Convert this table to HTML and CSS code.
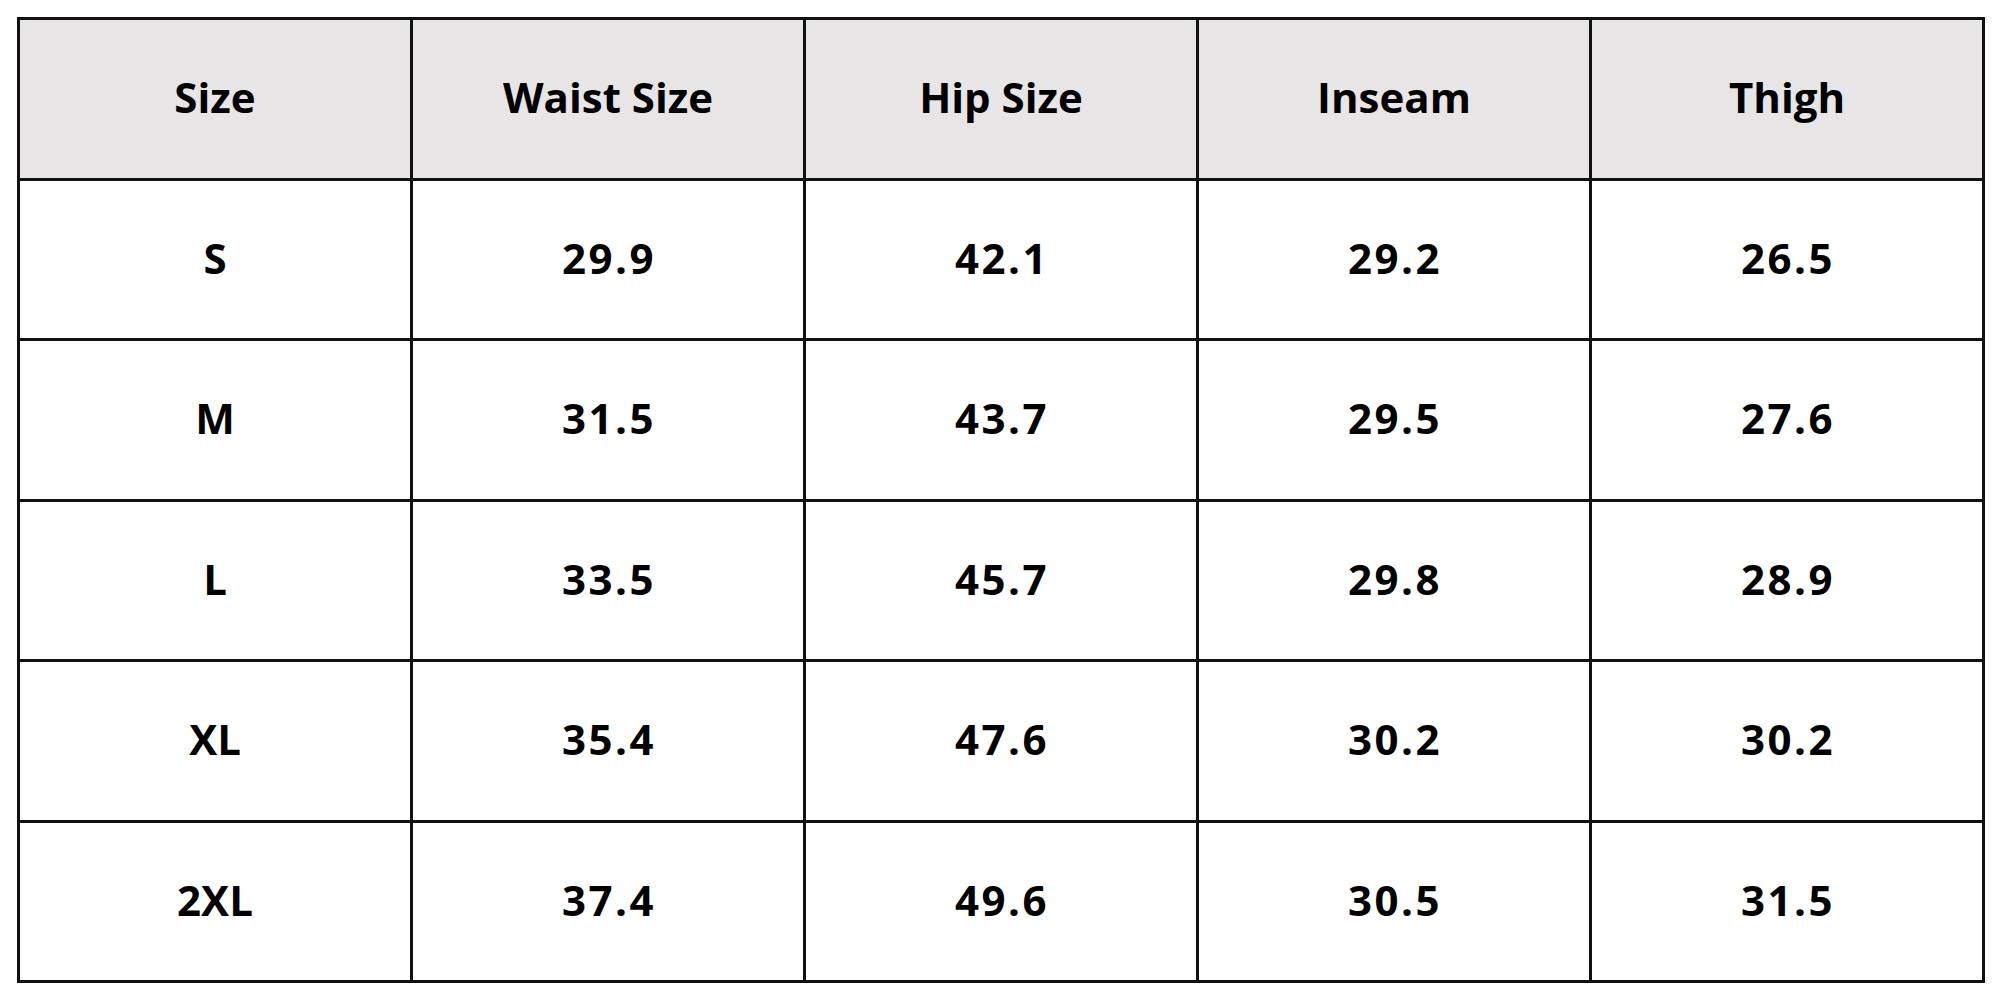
FILE: index.html
```html
<!DOCTYPE html>
<html>
<head>
<meta charset="utf-8">
<link rel="stylesheet" href="styles.css">
</head>
<body>
<div class="chart">
  <div class="cell head">Size</div>
  <div class="cell head">Waist Size</div>
  <div class="cell head">Hip Size</div>
  <div class="cell head">Inseam</div>
  <div class="cell head">Thigh</div>

  <div class="cell">S</div>
  <div class="cell num">29.9</div>
  <div class="cell num">42.1</div>
  <div class="cell num">29.2</div>
  <div class="cell num">26.5</div>

  <div class="cell">M</div>
  <div class="cell num">31.5</div>
  <div class="cell num">43.7</div>
  <div class="cell num">29.5</div>
  <div class="cell num">27.6</div>

  <div class="cell">L</div>
  <div class="cell num">33.5</div>
  <div class="cell num">45.7</div>
  <div class="cell num">29.8</div>
  <div class="cell num">28.9</div>

  <div class="cell">XL</div>
  <div class="cell num">35.4</div>
  <div class="cell num">47.6</div>
  <div class="cell num">30.2</div>
  <div class="cell num">30.2</div>

  <div class="cell">2XL</div>
  <div class="cell num">37.4</div>
  <div class="cell num">49.6</div>
  <div class="cell num">30.5</div>
  <div class="cell num">31.5</div>
</div>
</body>
</html>
```
FILE: styles.css
```css
html, body {
  margin: 0;
  padding: 0;
  background: #ffffff;
}
body {
  padding: 17px 0 0 17px;
  font-family: "Open Sans", "Noto Sans", sans-serif;
}
.chart {
  display: grid;
  grid-template-columns: repeat(5, 1fr);
  grid-template-rows: repeat(6, 1fr);
  gap: 3px;
  padding: 3px;
  width: 1968px;
  height: 966px;
  box-sizing: border-box;
  background: #111111;
}
.cell {
  background: #ffffff;
  display: flex;
  align-items: center;
  justify-content: center;
  padding-bottom: 4px;
  font-size: 42px;
  font-weight: 700;
  color: #000000;
  letter-spacing: 0;
}
.cell.num {
  letter-spacing: 2.5px;
  padding-left: 2px;
}
.cell.head {
  background: #e7e5e6;
}
```
